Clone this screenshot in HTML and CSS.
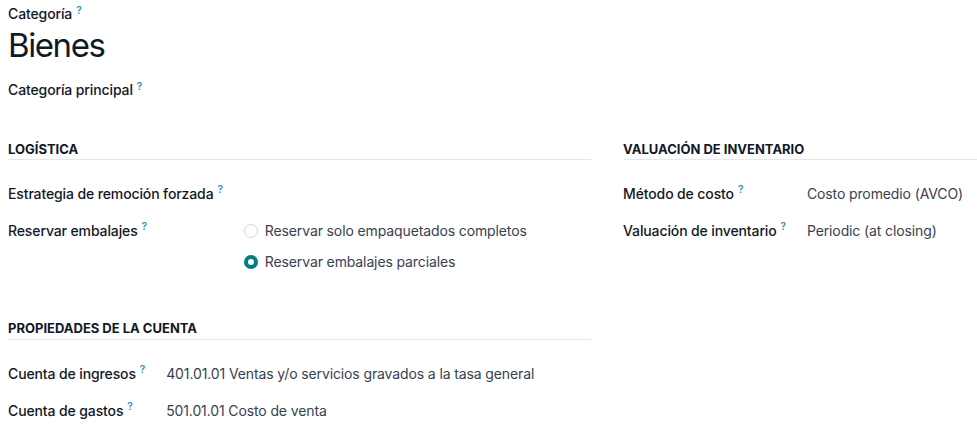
FILE: index.html
```html
<!DOCTYPE html>
<html lang="es">
<head>
<meta charset="utf-8">
<title>Bienes</title>
<link rel="stylesheet" href="styles.css">
</head>
<body>
<div class="sheet">
  <div class="title-block">
    <div class="field-label">Categoría<sup class="tip">?</sup></div>
    <h1 class="title">Bienes</h1>
    <div class="field-label parent">Categoría principal<sup class="tip">?</sup></div>
  </div>

  <div class="columns">
    <div class="col">
      <section class="group">
        <h2 class="group-title">Logística</h2>
        <div class="grid">
          <div class="label">Estrategia de remoción forzada<sup class="tip">?</sup></div>
          <div class="value"></div>
          <div class="label">Reservar embalajes<sup class="tip">?</sup></div>
          <div class="value">
            <div class="radios">
              <label class="radio"><span class="dot"></span>Reservar solo empaquetados completos</label>
              <label class="radio"><span class="dot on"></span>Reservar embalajes parciales</label>
            </div>
          </div>
        </div>
      </section>

      <section class="group accounts">
        <h2 class="group-title">Propiedades de la cuenta</h2>
        <div class="grid">
          <div class="label">Cuenta de ingresos<sup class="tip">?</sup></div>
          <div class="value">401.01.01 Ventas y/o servicios gravados a la tasa general</div>
          <div class="label">Cuenta de gastos<sup class="tip">?</sup></div>
          <div class="value">501.01.01 Costo de venta</div>
        </div>
      </section>
    </div>

    <div class="col">
      <section class="group">
        <h2 class="group-title">Valuación de inventario</h2>
        <div class="grid">
          <div class="label">Método de costo<sup class="tip">?</sup></div>
          <div class="value">Costo promedio (AVCO)</div>
          <div class="label">Valuación de inventario<sup class="tip">?</sup></div>
          <div class="value">Periodic (at closing)</div>
        </div>
      </section>
    </div>
  </div>
</div>
</body>
</html>
```

FILE: styles.css
```css
html, body {
  margin: 0;
  padding: 0;
  background: #ffffff;
}

body {
  font-family: Inter, "Noto Sans", "Liberation Sans", sans-serif;
  font-size: 14px;
  letter-spacing: -0.12px;
  color: #374151;
}

.sheet {
  padding: 4px 0 0 8px;
}

.field-label {
  font-weight: 500;
  color: #111827;
  line-height: 20px;
}

.tip {
  color: #1a93c0;
  font-size: 10px;
  font-weight: 600;
  margin-left: 4px;
  vertical-align: top;
  position: relative;
  top: -4px;
}

.title {
  margin: 0;
  font-size: 33px;
  font-weight: 400;
  line-height: 42px;
  color: #111827;
  letter-spacing: -1.4px;
}

.parent {
  margin-top: 14px;
}

.columns {
  display: grid;
  grid-template-columns: 583px 1fr;
  column-gap: 32px;
  margin-top: 39px;
}

.group-title {
  margin: 0;
  font-size: 13px;
  font-weight: 700;
  text-transform: uppercase;
  line-height: 20px;
  color: #111827;
  letter-spacing: 0;
  border-bottom: 1px solid #e5e7eb;
}

.grid {
  display: grid;
  grid-template-columns: max-content 1fr;
  column-gap: 21px;
  row-gap: 16px;
  margin-top: 23px;
  line-height: 21px;
}

.label {
  font-weight: 500;
  color: #111827;
  white-space: nowrap;
}

.value {
  color: #374151;
}

.radios {
  display: flex;
  flex-direction: column;
  gap: 10px;
}

.radio {
  display: flex;
  align-items: center;
  gap: 7px;
}

.dot {
  width: 14px;
  height: 14px;
  box-sizing: border-box;
  border-radius: 50%;
  border: 1px solid #d1d5db;
  background: #fff;
  flex: none;
}

.dot.on {
  border: 4px solid #017e84;
  background: #fff;
}

.accounts {
  margin-top: 46px;
}

.accounts .group-title {
  padding-bottom: 1px;
}

.accounts .grid {
  margin-top: 23px;
}
```
